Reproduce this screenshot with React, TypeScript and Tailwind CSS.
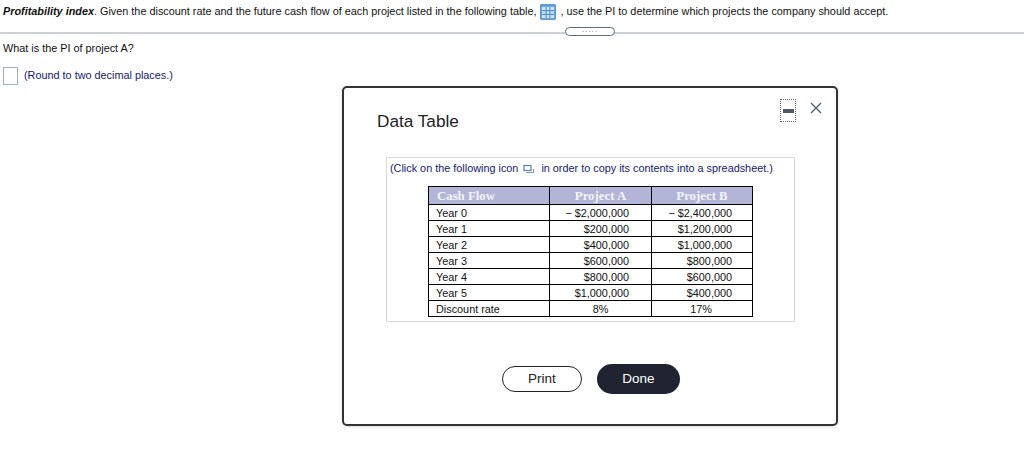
const rows = [
  ["Year 0", "− $2,000,000", "− $2,400,000"],
  ["Year 1", "$200,000", "$1,200,000"],
  ["Year 2", "$400,000", "$1,000,000"],
  ["Year 3", "$600,000", "$800,000"],
  ["Year 4", "$800,000", "$600,000"],
  ["Year 5", "$1,000,000", "$400,000"],
];

function GridIcon() {
  return (
    <svg width="16" height="16" viewBox="0 0 17 17" className="mx-[4px] shrink-0">
      <rect x="0" y="0" width="17" height="17" rx="1.5" fill="#5b9be0" />
      <rect x="2" y="3" width="13" height="12" fill="#d6e6f7" />
      <path d="M2 7H15M2 11H15M6.5 3V15M10.5 3V15" stroke="#4f8fd8" strokeWidth="1.2" />
    </svg>
  );
}

function CopyIcon() {
  return (
    <svg width="12" height="10" viewBox="0 0 12 10" className="mx-[5px] shrink-0">
      <rect x="1" y="1.5" width="7" height="5" fill="#fff" stroke="#5f7fa8" strokeWidth="1.2" />
      <path d="M3 8.5H11M10.5 5V8.5" stroke="#7f97b8" strokeWidth="1.2" fill="none" />
    </svg>
  );
}

export default function App() {
  return (
    <div className="relative h-[460px] w-[1024px] overflow-hidden bg-white font-['Liberation_Sans',Arial,sans-serif] text-[10.85px] text-[#111]">
      <div className="flex h-[22px] items-center pl-[3px] pt-[1px]">
        <span className="font-bold italic">Profitability index</span>
        <span>. Given the discount rate and the future cash flow of each project listed in the following table,</span>
        <GridIcon />
        <span>, use the PI to determine which projects the company should accept.</span>
      </div>
      <div className="relative mt-[10px] h-[2px] bg-[#ccd1d6]">
        <div className="absolute left-[565px] top-[-5px] flex h-[9px] w-[50px] items-center justify-center rounded-full border border-[#5d6b82] bg-white text-[8px] leading-none tracking-[1px] text-[#5d6b82]">
          <span className="mt-[-3px]">.....</span>
        </div>
      </div>
      <p className="mt-[8px] pl-[3px] leading-[13px]">What is the PI of project A?</p>
      <div className="mt-[12px] flex items-center pl-[3px]">
        <div className="h-[18px] w-[15px] border border-[#9fb0c0] bg-white" />
        <span className="ml-[6px] mt-[-2px] text-[#14206f]">(Round to two decimal places.)</span>
      </div>

      <div className="absolute left-[342px] top-[86px] h-[340px] w-[496px] rounded-[5px] border-2 border-[#333] bg-white shadow-[0_1px_3px_rgba(0,0,0,0.15)]">
        <div className="absolute left-[436px] top-[11px] flex h-[23px] w-[16px] items-center justify-center border border-dotted border-[#666]">
          <div className="h-[4px] w-[11px] bg-[#4f5a68]" />
        </div>
        <svg width="12" height="12" viewBox="0 0 12 12" className="absolute left-[466px] top-[14px]">
          <path d="M1 1L11 11M11 1L1 11" stroke="#4f5a68" strokeWidth="1.3" />
        </svg>

        <h2 className="pl-[33px] pt-[23px] text-[17.2px] leading-[20px] text-[#222]">Data Table</h2>

        <div className="ml-[42px] mt-[26px] h-[165px] w-[409px] border border-[#d9d9d9] pt-[4px]">
          <div className="flex items-center pl-[3px] leading-[13px] text-[#14206f]">
            (Click on the following icon
            <CopyIcon />
            <span className="ml-[1px]">in order to copy its contents into a spreadsheet.)</span>
          </div>
          <table className="ml-[41px] mt-[11px] w-[324px] table-fixed border-collapse text-[#111]">
            <colgroup>
              <col className="w-[121px]" />
              <col className="w-[102px]" />
              <col className="w-[101px]" />
            </colgroup>
            <thead>
              <tr className="h-[18px] bg-[#b3b5d7] font-['Liberation_Serif',serif] text-[12.8px] font-bold leading-[14px] text-[#f4f4fa]">
                <th className="border border-black pl-[8px] text-left">Cash Flow</th>
                <th className="border border-black text-center">Project A</th>
                <th className="border border-black text-center">Project B</th>
              </tr>
            </thead>
            <tbody>
              {rows.map(([a, b, c]) => (
                <tr key={a} className="h-[16px] leading-[14px]">
                  <td className="border border-black pl-[7px]">{a}</td>
                  <td className="border border-black pr-[22px] text-right">{b}</td>
                  <td className="border border-black pr-[20px] text-right">{c}</td>
                </tr>
              ))}
              <tr className="h-[16px] leading-[14px]">
                <td className="border border-black border-t-[#777] pl-[7px]">Discount rate</td>
                <td className="border border-black border-t-[#777] text-center">8%</td>
                <td className="border border-black border-t-[#777] pr-[2px] text-center">17%</td>
              </tr>
            </tbody>
          </table>
        </div>

        <div className="absolute left-[158px] top-[276px] flex items-center gap-[15px]">
          <button className="h-[26px] w-[80px] rounded-full border border-[#222] bg-white text-[13.5px] text-[#222]">Print</button>
          <button className="h-[30px] w-[83px] rounded-full bg-[#1f2430] text-[13.5px] text-white">Done</button>
        </div>
      </div>
    </div>
  );
}
